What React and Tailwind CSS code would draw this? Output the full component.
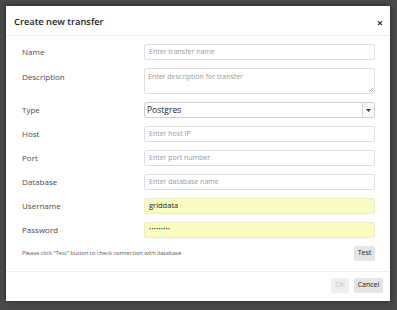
import React from 'react';

const rows = [
  { label: 'Name', placeholder: 'Enter transfer name' },
  { label: 'Description', placeholder: 'Enter description for transfer', area: true },
  { label: 'Type', select: 'Postgres' },
  { label: 'Host', placeholder: 'Enter host IP' },
  { label: 'Port', placeholder: 'Enter port number' },
  { label: 'Database', placeholder: 'Enter database name' },
  { label: 'Username', value: 'griddata', filled: true },
  { label: 'Password', value: '•••••••••', filled: true, secret: true },
];

function Field({ row }) {
  if (row.area) {
    return (
      <div className="relative h-[26px] rounded-[2px] border border-[#dedede] bg-white px-[3px] pt-[3px] text-[7px] text-[#9a9a9a]">
        {row.placeholder}
        <svg className="absolute right-[1px] bottom-[1px]" width="5" height="5" viewBox="0 0 5 5">
          <path d="M5 1 L1 5 M5 3 L3 5" stroke="#999" strokeWidth="0.7" />
        </svg>
      </div>
    );
  }
  if (row.select) {
    return (
      <div className="flex h-[16px] rounded-[2px] border border-[#cfcfcf] bg-white">
        <div className="flex-1 flex items-center px-[2px] text-[8.5px] text-[#222]">{row.select}</div>
        <div className="w-[12px] flex items-center justify-center border-l border-[#d6d6d6] bg-[#fafafa]">
          <svg width="5" height="3" viewBox="0 0 5 3">
            <path d="M0 0 H5 L2.5 3 Z" fill="#333" />
          </svg>
        </div>
      </div>
    );
  }
  return (
    <div
      className={
        'flex items-center h-[16px] rounded-[2px] border px-[4px] ' +
        (row.filled
          ? 'bg-[#fafcc0] border-[#ececc8] text-[#222] ' + (row.secret ? 'text-[5px] tracking-[0.5px]' : 'text-[7.5px]')
          : 'bg-white border-[#dedede] text-[7px] text-[#9a9a9a]')
      }
    >
      {row.placeholder || row.value}
    </div>
  );
}

export default function App() {
  return (
    <div
      className="w-[397px] h-[310px] bg-[#4a4a4a] pt-[6px] pl-[6px]"
      style={{ fontFamily: '"Open Sans", sans-serif' }}
    >
      <div className="w-[384px] h-[295px] bg-white flex flex-col shadow-[0_0_6px_rgba(0,0,0,0.5)]">
        <div className="h-[30px] flex items-center justify-between pt-[3px] pl-[8px] pr-[7px] border-b border-[#eeeeee]">
          <span className="text-[9.3px] font-semibold text-[#222]">Create new transfer</span>
          <span className="text-[11px] font-bold text-[#333] leading-none">×</span>
        </div>
        <div className="px-[15px] pt-[8px] pb-[10px] border-b border-[#eeeeee]">
          <div className="flex flex-col gap-[8px]">
            {rows.map((row) => (
              <div key={row.label} className="flex">
                <div className={'w-[123px] pl-[1px] text-[8px] text-[#4a4a4a] ' + (row.area ? 'pt-[3px]' : 'leading-[16px]')}>
                  {row.label}
                </div>
                <div className="flex-1">
                  <Field row={row} />
                </div>
              </div>
            ))}
            <div className="flex items-center justify-between">
              <span className="pl-[1px] text-[5.7px] text-[#555]">
                Please click "Test" button to check connection with database
              </span>
              <button className="h-[15px] w-[21px] rounded-[2px] bg-[#e4e4e4] text-[7px] text-[#222]">Test</button>
            </div>
          </div>
        </div>
        <div className="flex justify-end gap-[5px] pt-[6px] pr-[7px]">
          <button className="h-[15px] w-[18px] rounded-[2px] bg-[#f0f0f0] text-[7px] text-[#c4c4c4]">OK</button>
          <button className="h-[15px] w-[29px] rounded-[2px] bg-[#e4e4e4] text-[7px] text-[#222]">Cancel</button>
        </div>
      </div>
    </div>
  );
}
